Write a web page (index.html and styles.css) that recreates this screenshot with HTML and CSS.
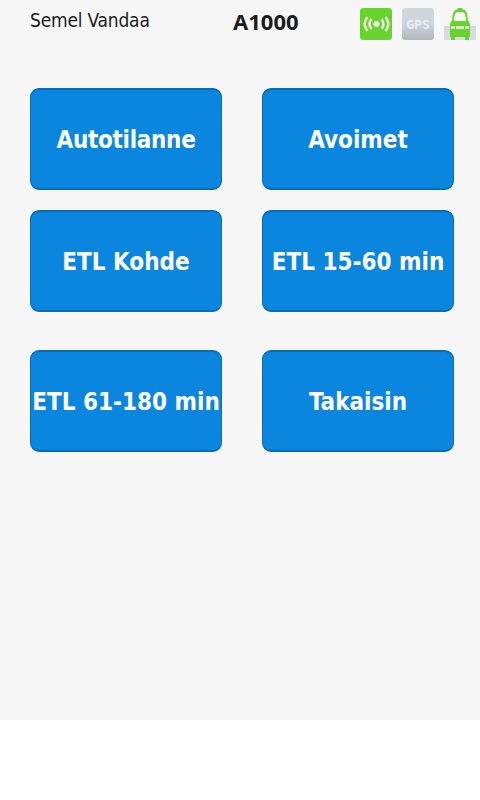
FILE: index.html
```
<!DOCTYPE html>
<html lang="fi">
<head>
    <meta charset="UTF-8">
    <meta name="viewport" content="width=device-width, initial-scale=1.0">
    <title>Semel Vandaa</title>
    <link rel="stylesheet" href="styles.css">
</head>
<body>
    <div class="screen">
        <header class="header">
            <span class="driver">Semel Vandaa</span>
            <span class="car-id">A1000</span>
            <div class="status">
                <svg width="32" height="32" viewBox="0 0 32 32">
                    <rect width="32" height="32" rx="3.5" fill="#66d32e"/>
                    <circle cx="16.5" cy="16" r="3" fill="#f2fbea"/>
                    <g fill="none" stroke="#e6efdc" stroke-width="2.5">
                        <path d="M11.5 11Q7.5 16 11.5 21M7.500 9Q1.800 16 7.500 23"/>
                        <path d="M21.500 11Q25.500 16 21.500 21M25.500 9Q31.200 16 25.500 23"/>
                    </g>
                </svg>
                <span class="gps">GPS</span>
                <svg width="32" height="32" viewBox="0 0 32 32">
                    <path fill="#d5dbdf" d="M0 18h32v14H0z"/>
                    <path fill="#66d32e" fill-rule="evenodd" d="M14 0h4l1 2h2l2 3 1 7 2 4v13h-1v3h-4v-3H11v3H7v-3H6V16l2-4 1-7 2-3h2zM13 4l-2 2-1 5v2h12v-2l-1-5-2-2z"/>
                    <path fill="#dce8d5" d="M7 18h4v3H7zM12 18h8v3h-8zM21 18h4v3h-4z"/>
                </svg>
            </div>
        </header>
        <main class="menu">
            <button class="tight">Autotilanne</button>
            <button>Avoimet</button>
            <button>ETL Kohde</button>
            <button>ETL 15-60 min</button>
            <button class="last-row">ETL 61-180 min</button>
            <button class="last-row">Takaisin</button>
        </main>
    </div>
</body>
</html>
```
FILE: styles.css
```
body {
    font-family: "DejaVu Sans Condensed", "DejaVu Sans", sans-serif;
    margin: 0;
    background-color: #fff;
}
.screen {
    width: 480px;
    height: 720px;
    background-color: #f7f7f7;
}
.header {
    display: grid;
    grid-template-columns: 203px 127px 116px;
    box-sizing: border-box;
    height: 88px;
    padding: 8px 0 0 30px;
    color: #1c1c1c;
}
.driver {
    font-size: 19px;
    letter-spacing: -0.2px;
    line-height: 24px;
    white-space: nowrap;
}
.car-id {
    font-family: "Noto Sans", sans-serif;
    font-size: 22px;
    font-weight: bold;
    line-height: 27px;
}
.status {
    display: flex;
    gap: 10px;
}
.status svg {
    flex: none;
}
.gps {
    flex: none;
    width: 32px;
    height: 32px;
    border-radius: 3px;
    background: linear-gradient(#cfd7de 45%, #b0b8be);
    color: #e8edf1;
    font-family: "DejaVu Sans Mono", monospace;
    font-size: 13px;
    font-weight: bold;
    line-height: 33px;
    text-align: center;
}
.menu {
    display: grid;
    grid-template-columns: 192px 192px;
    column-gap: 40px;
    row-gap: 20px;
    padding-left: 30px;
}
button {
    height: 102px;
    padding: 2px 0 0;
    background-color: #0a86de;
    color: #fff;
    border: solid #086db8;
    border-width: 2px 1px;
    border-radius: 9px;
    font-family: "DejaVu Sans Condensed", "DejaVu Sans", sans-serif;
    font-size: 24px;
    font-weight: bold;
    white-space: nowrap;
}
.tight {
    letter-spacing: -0.3px;
}
.last-row {
    margin-top: 18px;
}
```
